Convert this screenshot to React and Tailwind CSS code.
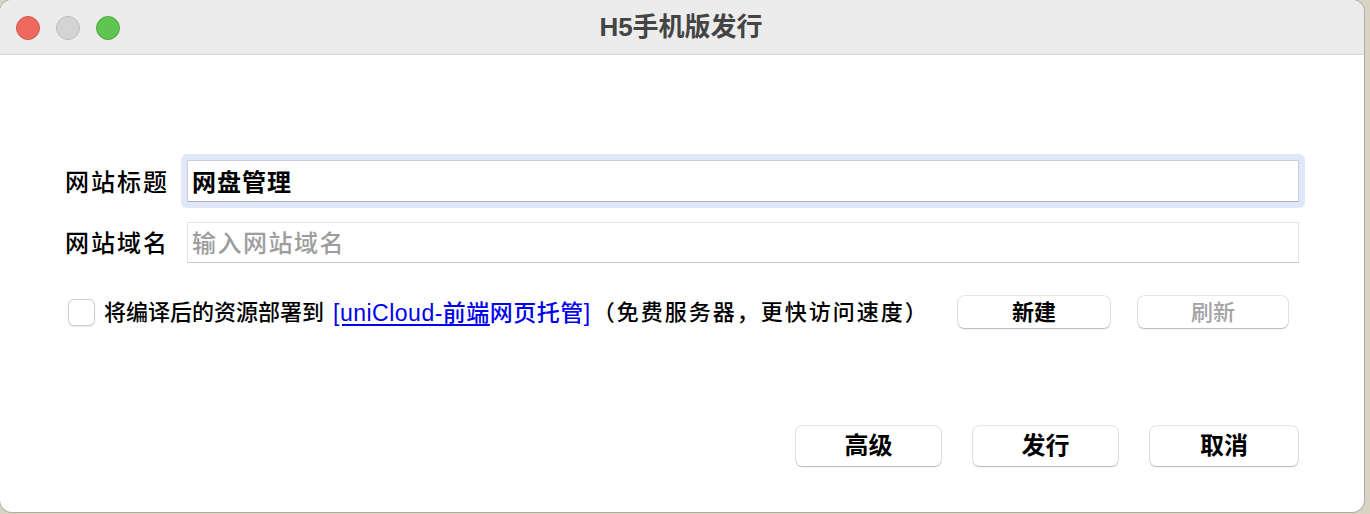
import React from "react";

const CJK = { fontFamily: '"Liberation Sans", "Noto Sans CJK SC", sans-serif' };

function Btn({ children, w, disabled }) {
  return (
    <button
      className={
        "h-full rounded-[6px] bg-white flex items-center justify-center font-bold shadow-[0_0_0_0.5px_rgba(0,0,0,0.18),0_1px_1.5px_rgba(0,0,0,0.22)] " +
        (disabled ? "text-[#a3a3a3] font-medium" : "text-black")
      }
      style={{ width: w }}
    >
      {children}
    </button>
  );
}

export default function App() {
  return (
    <div className="w-[1370px] h-[514px] bg-[#d8d4c5] overflow-hidden" style={CJK}>
      <div className="w-[1364px] h-[512px] rounded-[12px] bg-white overflow-hidden shadow-[0_0_0_1px_rgba(0,0,0,0.18)] flex flex-col">
        {/* title bar */}
        <div className="h-[55px] shrink-0 bg-[#ebeceb] border-b border-[#d7d7d7] grid grid-cols-[1fr_auto_1fr] items-center">
          <div className="flex items-center gap-[16px] pl-[16px] pt-[1px]">
            <div className="w-[24px] h-[24px] rounded-full bg-[#ee6a5e] border border-[#d5574b]" />
            <div className="w-[24px] h-[24px] rounded-full bg-[#d4d4d4] border border-[#bdbdbd]" />
            <div className="w-[24px] h-[24px] rounded-full bg-[#60c453] border border-[#4fa940]" />
          </div>
          <div className="text-[26px] font-bold text-[#444444] leading-none pr-[2px]">H5手机版发行</div>
          <div />
        </div>

        {/* form */}
        <div className="flex flex-col pt-[99px]">
          <div className="flex items-center pl-[65px]">
            <div className="w-[116px] text-[24px] font-medium text-black leading-none tracking-[2px] pt-[3px]">网站标题</div>
            <div className="w-[1124px] p-[4px] rounded-[6px] bg-[#dfe7f8]">
              <div className="m-[2px] h-[42px] bg-white border border-[#c6cde2] border-b-[#a9afbf] flex items-center pl-[4px] pt-[3px]">
                <span className="text-[24px] font-bold text-black leading-none tracking-[1px]">网盘管理</span>
              </div>
            </div>
          </div>
          <div className="flex items-center pl-[65px] mt-[8px]">
            <div className="w-[116px] text-[24px] font-medium text-black leading-none tracking-[2px] pt-[2px]">网站域名</div>
            <div className="w-[1124px] p-[6px]">
              <div className="h-[41px] bg-white border border-[#e4e4e4] border-b-[#c9c9c9] flex items-center pl-[4px] pt-[2px]">
                <span className="text-[24px] font-medium text-[#9d9d9d] leading-none tracking-[1.5px]">输入网站域名</span>
              </div>
            </div>
          </div>

          <div className="flex items-center h-[32px] mt-[27px] pl-[68px] pr-[76px]">
            <div className="w-[27px] h-[27px] rounded-[6px] bg-white border border-[#cfcfcf] shadow-[0_0.5px_1px_rgba(0,0,0,0.1)]" />
            <div className="ml-[9px] text-[22px] font-medium text-black leading-none whitespace-nowrap flex items-center pt-[2px]">
              <span>将编译后的资源部署到</span>
              <span className="ml-[9px] text-[#0000ee] text-[23px] tracking-[0.5px]">
                <span className="underline underline-offset-[3px]">[uniCloud-前端</span>网页托管]
              </span>
              <span className="ml-[2px] tracking-[2px]">（免费服务器，更快访问速度）</span>
            </div>
            <div className="ml-auto flex h-full gap-[28px] text-[22px]">
              <Btn w={152}>新建</Btn>
              <Btn w={150} disabled>刷新</Btn>
            </div>
          </div>

          <div className="flex justify-end gap-[32px] h-[40px] mt-[98px] pr-[66px] text-[24px]">
            <Btn w={145}>高级</Btn>
            <Btn w={145}>发行</Btn>
            <Btn w={148}>取消</Btn>
          </div>
        </div>
      </div>
    </div>
  );
}
